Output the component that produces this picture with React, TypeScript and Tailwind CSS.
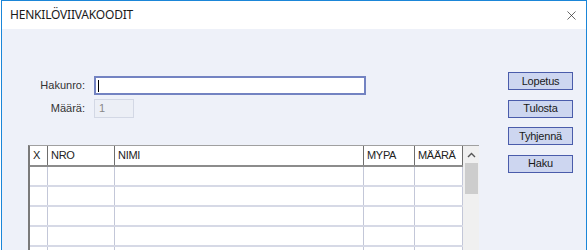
import { X } from 'lucide-react'

const cols = [
  { name: 'X', w: 'w-[18px]' },
  { name: 'NRO', w: 'w-[67px]' },
  { name: 'NIMI', w: 'w-[249px]' },
  { name: 'MYPA', w: 'w-[51px]' },
  { name: 'MÄÄRÄ', w: 'w-[48px]' },
]

const buttons = ['Lopetus', 'Tulosta', 'Tyhjennä', 'Haku']

export default function App() {
  return (
    <div className="w-[588px] h-[250px] overflow-hidden bg-white">
      <div className="ml-[1px] w-[586px] h-[260px] border border-b-0 border-[#1b86d8] flex flex-col">
        {/* title bar */}
        <div className="h-[28px] bg-white flex items-center justify-between pl-[8px] pr-[7px] shrink-0">
          <span className="text-[12px] text-[#1a1a1a] font-['Noto_Sans',sans-serif] tracking-[-0.2px]">
            HENKILÖVIIVAKOODIT
          </span>
          <X className="w-[15px] h-[15px] text-[#222]" strokeWidth={1.1} />
        </div>

        <div className="flex-1 bg-[#eef1f9] flex font-['Liberation_Sans',Arial,sans-serif] text-[11px] text-[#222]">
          {/* left side: form + table */}
          <div className="pl-[26px] pt-[47px]">
            <div className="grid grid-cols-[57px_272px] gap-x-[9px] gap-y-[4px] items-center">
              <span className="text-right text-[#333]">Hakunro:</span>
              <div className="h-[19px] bg-white border-2 border-[#7383c2] flex items-center pl-[2px]">
                <div className="w-[1px] h-[12px] bg-black" />
              </div>
              <span className="text-right text-[#333]">Määrä:</span>
              <div className="w-[40px] h-[19px] bg-[#eceff6] border border-[#d3d8e5] flex items-center pl-[4px] text-[#888]">
                1
              </div>
            </div>

            <div className="mt-[27px] w-[451px] bg-white border-l-2 border-t border-l-[#7a7a7a] border-t-[#a0a0a0] flex">
              <div className="flex flex-col">
                <div className="flex h-[21px] border-b-2 border-[#8c8c8c]">
                  {cols.map((c) => (
                    <div
                      key={c.name}
                      className={`${c.w} border-r border-[#6e6e6e] pl-[3px] flex items-center text-[#222] tracking-[-0.3px]`}
                    >
                      {c.name}
                    </div>
                  ))}
                </div>
                {[0, 1, 2, 3, 4].map((r) => (
                  <div key={r} className="flex h-[20px] border-b-2 border-[#d6d9e6]">
                    {cols.map((c) => (
                      <div key={c.name} className={`${c.w} border-r border-[#c3c7d8]`} />
                    ))}
                  </div>
                ))}
              </div>
              {/* scrollbar */}
              <div className="w-[16px] bg-[#f0f0f0] flex flex-col items-center">
                <div className="h-[17px] flex items-center justify-center">
                  <svg width="9" height="6" viewBox="0 0 9 6">
                    <path d="M1 5 L4.5 1.5 L8 5" fill="none" stroke="#555" strokeWidth="1.4" />
                  </svg>
                </div>
                <div className="w-[13px] h-[31px] bg-[#cdcdcd]" />
              </div>
            </div>
          </div>

          {/* right side buttons */}
          <div className="pl-[29px] pt-[43px] flex flex-col gap-[9.5px]">
            {buttons.map((b) => (
              <div
                key={b}
                className="w-[65px] h-[18px] bg-[#cdd6f0] border border-[#4a5cab] flex items-center justify-center text-[#1a1a1a] tracking-[-0.2px]"
              >
                {b}
              </div>
            ))}
          </div>
        </div>
      </div>
    </div>
  )
}
